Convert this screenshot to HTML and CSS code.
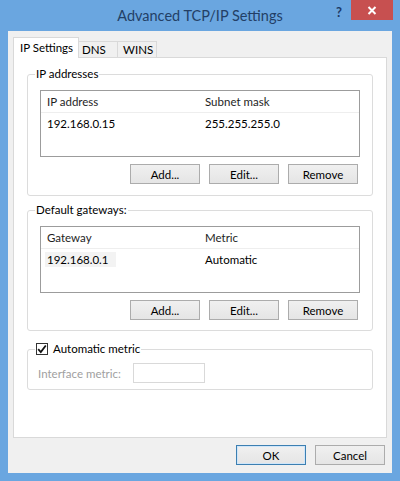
FILE: index.html
```html
<!DOCTYPE html>
<html>
<head>
<meta charset="utf-8">
<title>Advanced TCP/IP Settings</title>
<link rel="stylesheet" href="styles.css">
</head>
<body>
<div class="window">
  <div class="titlebar">
    <div class="spacer"></div>
    <div class="title">Advanced TCP/IP Settings</div>
    <div class="controls">
      <span class="help">?</span>
      <span class="close"><svg width="10" height="9" viewBox="0 0 10 9"><path d="M1.5 1 L8.5 8 M8.5 1 L1.5 8" stroke="#fff" stroke-width="2" fill="none"/></svg></span>
    </div>
  </div>
  <div class="client">
    <div class="tabs">
      <div class="tab active">IP Settings</div>
      <div class="tab tab-dns">DNS</div>
      <div class="tab tab-wins">WINS</div>
    </div>
    <div class="panel">
      <fieldset class="group group-ip">
        <legend>IP addresses</legend>
        <div class="group-body">
          <div class="list">
            <div class="list-row head"><span class="c1">IP address</span><span class="c2">Subnet mask</span></div>
            <div class="list-row item"><span class="c1">192.168.0.15</span><span class="c2">255.255.255.0</span></div>
          </div>
          <div class="btn-row">
            <button class="btn">Add...</button>
            <button class="btn">Edit...</button>
            <button class="btn">Remove</button>
          </div>
        </div>
      </fieldset>
      <fieldset class="group group-gw">
        <legend>Default gateways:</legend>
        <div class="group-body">
          <div class="list">
            <div class="list-row head"><span class="c1">Gateway</span><span class="c2">Metric</span></div>
            <div class="list-row item"><span class="c1"><span class="hl">192.168.0.1</span></span><span class="c2">Automatic</span></div>
          </div>
          <div class="btn-row">
            <button class="btn">Add...</button>
            <button class="btn">Edit...</button>
            <button class="btn">Remove</button>
          </div>
        </div>
      </fieldset>
      <fieldset class="group group-metric">
        <legend><span class="check-label"><span class="check"><svg width="10" height="10" viewBox="0 0 10 10"><path d="M1.2 5.2 L3.8 8 L8.8 1.5" stroke="#111" stroke-width="1.8" fill="none"/></svg></span>Automatic metric</span></legend>
        <div class="group-body metric-body">
          <span class="disabled-label">Interface metric:</span>
          <span class="field"></span>
        </div>
      </fieldset>
    </div>
    <div class="footer">
      <button class="btn default">OK</button>
      <button class="btn">Cancel</button>
    </div>
  </div>
</div>
</body>
</html>
```
FILE: styles.css
```css
* { box-sizing: border-box; }
html, body { margin: 0; padding: 0; }
body {
  width: 400px;
  height: 481px;
  overflow: hidden;
  font-family: Lato, "Noto Sans", sans-serif;
  font-size: 11.5px;
  color: #000;
}
.window {
  width: 400px;
  height: 481px;
  background: #6aa6e0;
  display: flex;
  flex-direction: column;
}
.titlebar {
  height: 31px;
  display: grid;
  grid-template-columns: 1fr auto 1fr;
  align-items: center;
}
.title {
  font-size: 14.5px;
  color: #233f66;
  line-height: 20px;
}
.controls {
  justify-self: end;
  align-self: start;
  display: flex;
  align-items: flex-start;
  margin-right: 7px;
}
.help {
  font-weight: bold;
  color: #1d3a66;
  font-size: 13px;
  line-height: 16px;
  margin-top: 4px;
  margin-right: 9px;
}
.close {
  width: 42px;
  height: 20px;
  background: #c75050;
  display: flex;
  align-items: center;
  justify-content: center;
}
.client {
  flex: 1;
  margin: 0 8px 8px;
  background: #f0f0f0;
  padding: 6px 5px 0;
  display: flex;
  flex-direction: column;
}
.tabs {
  display: flex;
  align-items: flex-end;
  height: 21px;
  margin-bottom: -1px;
}
.tab {
  height: 16px;
  margin-bottom: 1px;
  margin-left: -1px;
  border: 1px solid #d9d9d9;
  border-bottom: none;
  background: #f0f0f0;
  line-height: 16px;
}
.tab.active {
  position: relative;
  height: 21px;
  width: 66px;
  margin-bottom: 0;
  margin-left: 0;
  background: #fff;
  padding-left: 6px;
  line-height: 19px;
}
.tab-dns { width: 40px; padding-left: 3px; }
.tab-wins { width: 40px; padding-left: 5px; }
.panel {
  flex: 1;
  background: #fff;
  border: 1px solid #d9d9d9;
  padding: 9px 13px 0;
}
.group {
  margin: 0;
  padding: 0 0 0 7px;
  border: 1px solid #dcdcdc;
  border-radius: 3px;
  min-width: 0;
}
.group legend {
  padding: 0 1px;
  height: 14px;
  line-height: 14px;
}
.group-body {
  padding: 9px 12px 11px 5px;
}
.group-gw { margin-top: 7px; }
.group-gw .group-body { padding-bottom: 10px; }
.group-metric { margin-top: 11px; }
.list {
  height: 67px;
  border: 1px solid #9c9c9c;
  background: #fff;
}
.list-row { display: flex; align-items: center; }
.list-row.head {
  height: 22px;
  border-bottom: 1px solid #eeeeee;
  color: #1e1e1e;
}
.list-row.item { height: 21px; }
.c1 { width: 158px; padding-left: 6px; }
.c2 { padding-left: 6px; }
.hl {
  background: #f3f3f3;
  margin-left: -2px;
  padding: 1px 7px 1px 2px;
}
.btn-row {
  display: flex;
  justify-content: flex-end;
  gap: 9px;
  margin-top: 7px;
  margin-right: 2px;
}
.btn {
  width: 70px;
  height: 20px;
  border: 1px solid #acacac;
  background: linear-gradient(#f0f0f0, #e5e5e5);
  font: inherit;
  color: #000;
  padding: 0;
  margin: 0;
}
.btn.default {
  border-color: #3c7fb1;
  box-shadow: inset 0 0 0 1px #cfe6fa;
}
.check-label {
  display: flex;
  align-items: center;
  gap: 5px;
  height: 14px;
}
.check {
  width: 12px;
  height: 12px;
  border: 1px solid #333;
  background: #fff;
  display: flex;
  align-items: center;
  justify-content: center;
}
.metric-body {
  display: flex;
  align-items: center;
  padding: 7px 12px 6px 3px;
}
.disabled-label {
  width: 95px;
  color: #a0a0a0;
}
.field {
  width: 72px;
  height: 20px;
  border: 1px solid #d9d9d9;
  background: #fff;
}
.footer {
  display: flex;
  justify-content: flex-end;
  gap: 9px;
  margin-top: 7px;
  padding: 0 2px 8px 0;
}
```
